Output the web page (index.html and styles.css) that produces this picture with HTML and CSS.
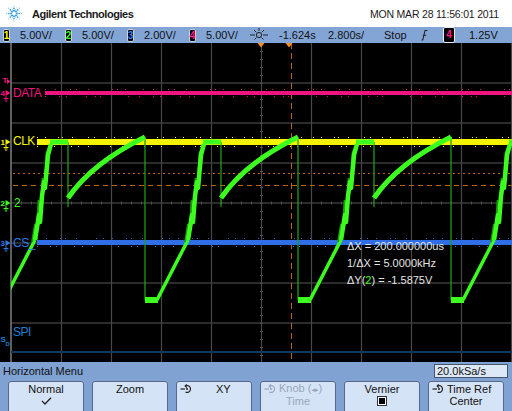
FILE: index.html
```html
<!DOCTYPE html>
<html lang="en">
<head>
<meta charset="utf-8">
<title>Agilent Scope</title>
<link rel="stylesheet" href="styles.css">
</head>
<body>
<div class="screen">
  <header class="top">
    <div class="brand">
      <svg class="logo" viewBox="0 0 28 24" width="22" height="23">
        <g fill="#3a9fd8">
          <circle cx="17.5" cy="12" r="1.3"/><circle cx="16.47" cy="14.47" r="1.3"/><circle cx="14" cy="15.5" r="1.3"/><circle cx="11.53" cy="14.47" r="1.3"/><circle cx="10.5" cy="12" r="1.3"/><circle cx="11.53" cy="9.53" r="1.3"/><circle cx="14" cy="8.5" r="1.3"/><circle cx="16.47" cy="9.53" r="1.3"/>
          <circle cx="20.5" cy="12" r="1.1"/><circle cx="18.6" cy="16.6" r="1.1"/><circle cx="14" cy="18.5" r="1.1"/><circle cx="9.4" cy="16.6" r="1.1"/><circle cx="7.5" cy="12" r="1.1"/><circle cx="9.4" cy="7.4" r="1.1"/><circle cx="14" cy="5.5" r="1.1"/><circle cx="18.6" cy="7.4" r="1.1"/>
        </g>
        <g fill="#7cc3ea">
          <circle cx="23.5" cy="12" r="0.8"/><circle cx="20.7" cy="18.7" r="0.8"/><circle cx="14" cy="21.5" r="0.8"/><circle cx="7.3" cy="18.7" r="0.8"/><circle cx="4.5" cy="12" r="0.8"/><circle cx="7.3" cy="5.3" r="0.8"/><circle cx="14" cy="2.5" r="0.8"/><circle cx="20.7" cy="5.3" r="0.8"/>
          <circle cx="18.6" cy="13.9" r="0.7"/><circle cx="15.9" cy="16.6" r="0.7"/><circle cx="12.1" cy="16.6" r="0.7"/><circle cx="9.4" cy="13.9" r="0.7"/><circle cx="9.4" cy="10.1" r="0.7"/><circle cx="12.1" cy="7.4" r="0.7"/><circle cx="15.9" cy="7.4" r="0.7"/><circle cx="18.6" cy="10.1" r="0.7"/>
          <circle cx="21.4" cy="15.1" r="0.55"/><circle cx="17.1" cy="19.4" r="0.55"/><circle cx="10.9" cy="19.4" r="0.55"/><circle cx="6.6" cy="15.1" r="0.55"/><circle cx="6.6" cy="8.9" r="0.55"/><circle cx="10.9" cy="4.6" r="0.55"/><circle cx="17.1" cy="4.6" r="0.55"/><circle cx="21.4" cy="8.9" r="0.55"/>
        </g>
      </svg>
      <span class="brand-name">Agilent Technologies</span>
    </div>
    <span class="date">MON MAR 28 11:56:01 2011</span>
  </header>

  <div class="status">
    <div class="ch"><span class="num c1">1</span><span class="val">5.00V/</span></div>
    <div class="ch"><span class="num c2">2</span><span class="val">5.00V/</span></div>
    <div class="ch"><span class="num c3">3</span><span class="val">2.00V/</span></div>
    <div class="ch"><span class="num c4">4</span><span class="val">5.00V/</span></div>
    <svg class="sun" viewBox="0 0 18 16" width="18" height="16">
      <g stroke="#222" stroke-width="1" fill="none">
        <circle cx="9" cy="8" r="2.6"/>
        <path d="M0 8 H5 M13 8 H18 M9 1 V4 M4 3 L6.3 5.3 M14 3 L11.7 5.3 M4.5 12.5 L6.5 10.5 M13.5 12.5 L11.5 10.5"/>
      </g>
    </svg>
    <span class="delay">-1.624s</span>
    <span class="tb">2.800s/</span>
    <span class="run">Stop</span>
    <svg class="edge" viewBox="0 0 7 12" width="7" height="12">
      <path d="M0.5 11 H1.8 L4 1.5 H6.5 M1.8 6.2 L5.2 6.2" stroke="#222" stroke-width="1.1" fill="none"/>
    </svg>
    <span class="src">4</span>
    <span class="lvl">1.25V</span>
  </div>

  <svg class="plot" viewBox="0 43 512 319" width="512" height="319">
    <defs>
      <clipPath id="area"><rect x="11" y="43" width="501" height="319"/></clipPath>
      <g id="cyc" fill="none" stroke-linecap="butt">
        <path d="M298,137 V300" stroke="#239a16" stroke-width="1.3"/>
        <path d="M221,142 V207" stroke="#239a16" stroke-width="1.3"/>
        <path d="M145,300 H158" stroke="#3dff1f" stroke-width="6"/>
        <path d="M157,300 L188,240" stroke="#3dff1f" stroke-width="3.5"/>
        <path d="M185,242 L188,224 L189.5,233 L191.5,200 L193.5,213 L195.5,178 L197.5,188 L199.5,153 L202,147" stroke="#1e9a10" stroke-width="1.8"/>
        <path d="M188,240 L192,215 L193,222 L195,196 L197,182 L198,188 L201,155 L204,144" stroke="#3dff1f" stroke-width="4.5" stroke-linejoin="round"/>
        <path d="M203,142 H221" stroke="#3dff1f" stroke-width="5"/>
        <path d="M221,198 Q245,163 298,137" stroke="#3dff1f" stroke-width="5"/>
      </g>
    </defs>

    <g stroke="#3b3b3b" stroke-width="1.4">
      <line x1="11" y1="83" x2="512" y2="83"/>
      <line x1="11" y1="123" x2="512" y2="123"/>
      <line x1="11" y1="163" x2="512" y2="163"/>
      <line x1="11" y1="203" x2="512" y2="203"/>
      <line x1="11" y1="243" x2="512" y2="243"/>
      <line x1="11" y1="283" x2="512" y2="283"/>
      <line x1="11" y1="323" x2="512" y2="323"/>
    </g>
    <line x1="11" y1="203" x2="512" y2="203" stroke="#505050" stroke-width="3" stroke-dasharray="1 9"/>
    <g stroke="#484848" stroke-width="1.2">
      <line x1="61.5" y1="43" x2="61.5" y2="362"/>
      <line x1="111.5" y1="43" x2="111.5" y2="362"/>
      <line x1="161.5" y1="43" x2="161.5" y2="362"/>
      <line x1="211.5" y1="43" x2="211.5" y2="362"/>
      <line x1="261.5" y1="43" x2="261.5" y2="362"/>
      <line x1="311.5" y1="43" x2="311.5" y2="362"/>
      <line x1="361.5" y1="43" x2="361.5" y2="362"/>
      <line x1="411.5" y1="43" x2="411.5" y2="362"/>
      <line x1="461.5" y1="43" x2="461.5" y2="362"/>
      <line x1="511.5" y1="43" x2="511.5" y2="362"/>
    </g>
    <line x1="261.5" y1="43" x2="261.5" y2="362" stroke="#505050" stroke-width="3" stroke-dasharray="1 7"/>
    <line x1="11" y1="43" x2="11" y2="362" stroke="#767676" stroke-width="1.6"/>

    <g stroke="#b8650f" stroke-width="1">
      <line x1="13" y1="173.5" x2="512" y2="173.5" stroke-dasharray="2 3"/>
      <line x1="13" y1="185.5" x2="512" y2="185.5" stroke-dasharray="5 4"/>
      <line x1="291.5" y1="43" x2="291.5" y2="362" stroke-dasharray="6 4"/>
    </g>
    <polygon points="257.5,43 264.5,43 261,47.5" fill="#f09020"/>
    <polygon points="285.5,43 292.5,43 289,47.5" fill="#f09020"/>

    <rect x="45" y="91" width="467" height="4" fill="#f0157e"/>
    <g stroke="#f0157e" stroke-width="1">
      <line x1="45" y1="89.5" x2="512" y2="89.5" stroke-dasharray="1 9 1 14 1 5 1 11 1 23 1 4 1 7 1 17"/>
      <line x1="45" y1="96.5" x2="512" y2="96.5" stroke-dasharray="1 13 1 6 1 19 1 8 1 4 1 27 1 10"/>
    </g>

    <rect x="37" y="139" width="475" height="6" fill="#f4f400"/>
    <g stroke="#f4f400" stroke-width="1">
      <line x1="37" y1="137.5" x2="512" y2="137.5" stroke-dasharray="1 7 1 12 1 3 1 9 1 15 1 5 1 11"/>
      <line x1="37" y1="146.5" x2="512" y2="146.5" stroke-dasharray="1 11 1 4 1 16 1 6 1 9 1 21"/>
    </g>

    <rect x="37" y="240" width="475" height="5" fill="#2f6ee6"/>
    <g stroke="#2f6ee6" stroke-width="1">
      <line x1="37" y1="238.5" x2="512" y2="238.5" stroke-dasharray="1 8 1 13 1 4 1 10 1 19 1 6"/>
      <line x1="37" y1="246.5" x2="512" y2="246.5" stroke-dasharray="1 12 1 5 1 17 1 7 1 9 1 25"/>
    </g>

    <rect x="11" y="351" width="501" height="2" fill="#0e3a62"/>

    <g clip-path="url(#area)">
      <use href="#cyc" x="-153"/>
      <use href="#cyc"/>
      <use href="#cyc" x="153"/>
      <use href="#cyc" x="306"/>
    </g>

    <text class="lbl" x="13" y="97" fill="#f0157e">DATA</text>
    <text class="lbl" x="13" y="145" fill="#f4f400">CLK</text>
    <text class="lbl" x="14" y="207" fill="#3dff1f">2</text>
    <text class="lbl" x="13" y="247" fill="#2f7ae8">CS_</text>
    <text class="lbl" x="13" y="336" fill="#1e80d2">SPI</text>

    <text class="mk" x="2.5" y="83" fill="#f0157e">T</text>
    <polygon points="7,79 10.5,81.5 7,84" fill="#f0157e"/>

    <text class="mk" x="0.5" y="96" fill="#f0157e">4</text>
    <polygon points="5.5,90 10.5,93 5.5,96" fill="#f0157e"/>
    <path d="M6,96 V98 M3.5,98.5 H8.5 M4.5,100 H7.5 M5.5,101.5 H6.5" stroke="#f0157e" stroke-width="1"/>

    <text class="mk" x="0.5" y="145" fill="#f4f400">1</text>
    <polygon points="5.5,139 10.5,142 5.5,145" fill="#f4f400"/>
    <path d="M6,145 V147 M3.5,147.5 H8.5 M4.5,149 H7.5 M5.5,150.5 H6.5" stroke="#f4f400" stroke-width="1"/>

    <text class="mk" x="0.5" y="206" fill="#3dff1f">2</text>
    <polygon points="5.5,200 10.5,203 5.5,206" fill="#3dff1f"/>
    <path d="M6,206 V208 M3.5,208.5 H8.5 M4.5,210 H7.5 M5.5,211.5 H6.5" stroke="#3dff1f" stroke-width="1"/>

    <text class="mk" x="0.5" y="246" fill="#2f7ae8">3</text>
    <polygon points="5.5,240 10.5,243 5.5,246" fill="#2f7ae8"/>
    <path d="M6,246 V248 M3.5,248.5 H8.5 M4.5,250 H7.5 M5.5,251.5 H6.5" stroke="#2f7ae8" stroke-width="1"/>

    <text class="mk" x="0.5" y="342" fill="#1e80d2">S</text>
    <text class="mk-sub" x="5.5" y="346" fill="#1e80d2">D</text>

    <text class="meas" x="347" y="250">ΔX = 200.000000us</text>
    <text class="meas" x="347" y="267">1/ΔX = 5.0000kHz</text>
    <text class="meas" x="347" y="284">ΔY(<tspan fill="#3dff1f">2</tspan>) = -1.5875V</text>
  </svg>

  <div class="menu">
    <div class="menu-head">
      <span class="menu-title">Horizontal Menu</span>
      <span class="rate">20.0kSa/s</span>
    </div>
    <div class="buttons">
      <div class="btn">
        <div class="l1">Normal</div>
        <div class="l2"><svg class="check" viewBox="0 0 11 8" width="11" height="8"><path d="M1 4 L4 7 L10 0.8" stroke="#222" stroke-width="1.3" fill="none"/></svg></div>
      </div>
      <div class="btn">
        <div class="l1">Zoom</div>
      </div>
      <div class="btn">
        <div class="l1 ic">
          <svg class="knob" viewBox="0 0 12 10" width="12" height="10"><g stroke="#222" stroke-width="1.2" fill="none"><path d="M5.5 2 A3.4 3.4 0 1 1 5.5 8"/><path d="M0.5 5 H5"/><path d="M6.8 0.4 L5.2 2 L6.8 3.6"/></g><circle cx="7" cy="5" r="1" fill="#222"/></svg>
          <span class="xy">XY</span>
        </div>
      </div>
      <div class="btn off">
        <div class="l1 ic">
          <svg class="knob" viewBox="0 0 12 10" width="12" height="10"><g stroke="#98a6bb" stroke-width="1.2" fill="none"><path d="M5.5 2 A3.4 3.4 0 1 1 5.5 8"/><path d="M0.5 5 H5"/><path d="M6.8 0.4 L5.2 2 L6.8 3.6"/></g><circle cx="7" cy="5" r="1" fill="#98a6bb"/></svg>
          <span class="txt">Knob (<span class="lr">◂▸</span>)</span>
        </div>
        <div class="l2">Time</div>
      </div>
      <div class="btn">
        <div class="l1">Vernier</div>
        <div class="l2"><span class="box"></span></div>
      </div>
      <div class="btn">
        <div class="l1 ic">
          <svg class="knob" viewBox="0 0 12 10" width="12" height="10"><g stroke="#222" stroke-width="1.2" fill="none"><path d="M5.5 2 A3.4 3.4 0 1 1 5.5 8"/><path d="M0.5 5 H5"/><path d="M6.8 0.4 L5.2 2 L6.8 3.6"/></g><circle cx="7" cy="5" r="1" fill="#222"/></svg>
          <span class="txt">Time Ref</span>
        </div>
        <div class="l2">Center</div>
      </div>
    </div>
  </div>
</div>
</body>
</html>
```
FILE: styles.css
```css
* { box-sizing: border-box; margin: 0; padding: 0; }
html, body { width: 512px; height: 411px; overflow: hidden; background: #000; }
body { font-family: "Liberation Sans", Arial, sans-serif; color: #111; }

.screen { width: 512px; height: 411px; display: flex; flex-direction: column; overflow: hidden; }

.top { height: 27px; flex-shrink: 0; background: #fff; display: flex; align-items: center; justify-content: space-between; padding: 0 13px 0 3px; }
.brand { display: flex; align-items: center; gap: 7px; }
.logo { display: block; }
.brand-name { font-weight: bold; font-size: 11px; letter-spacing: -0.45px; color: #1a1a1a; }
.date { font-size: 10.5px; letter-spacing: -0.2px; color: #1a1a1a; }

.status { height: 16px; flex-shrink: 0; background: #83a5d5; display: flex; align-items: center; padding-left: 3px; font-size: 11px; color: #111; white-space: nowrap; }
.ch { width: 62px; flex-shrink: 0; display: flex; align-items: center; }
.num { width: 7px; height: 13px; flex-shrink: 0; margin-right: 10px; background: #000; border: 1px solid #c9d1da; border-radius: 2px; font-size: 10px; font-weight: bold; line-height: 11px; text-align: center; display: flex; justify-content: center; }
.c1 { color: #ffff00; }
.c2 { color: #33ff22; }
.c3 { color: #3a7ef0; }
.c4 { color: #ff1a8c; }
.sun { flex-shrink: 0; margin-left: -1px; display: block; }
.delay { width: 40px; flex-shrink: 0; margin-left: 11px; }
.tb { width: 40px; flex-shrink: 0; margin-left: 9px; }
.run { width: 26px; flex-shrink: 0; margin-left: 16px; }
.edge { flex-shrink: 0; margin-left: 11px; display: block; }
.src { width: 12px; height: 16px; flex-shrink: 0; margin-left: 15px; background: #000; border: 1px solid #e8ecf0; border-radius: 2px; color: #ff1a8c; font-size: 10px; font-weight: bold; line-height: 14px; text-align: center; }
.lvl { margin-left: 14px; }

.plot { display: block; flex-shrink: 0; background: #000; }
.lbl { font-family: "Liberation Sans", Arial, sans-serif; font-size: 12px; letter-spacing: -0.5px; }
.mk { font-family: "Liberation Sans", Arial, sans-serif; font-size: 8px; font-weight: bold; }
.mk-sub { font-family: "Liberation Sans", Arial, sans-serif; font-size: 6px; font-weight: bold; }
.meas { font-family: "Liberation Sans", Arial, sans-serif; font-size: 11px; fill: #e4e4e4; }

.menu { flex: 1; background: #7fa2d3; overflow: hidden; }
.menu-head { height: 19px; display: flex; justify-content: space-between; align-items: flex-start; padding: 0 4px 0 3px; }
.menu-title { font-size: 11px; line-height: 13px; padding-top: 3px; }
.rate { width: 74px; height: 14px; margin-top: 2px; background: #dde8f7; border: 1px solid #44546c; font-size: 11px; line-height: 12px; padding-left: 2px; }

.buttons { display: flex; gap: 8px; padding-left: 8px; }
.btn { width: 76px; height: 33px; flex-shrink: 0; background: #d5e3f6; border: 1px solid #56698a; border-radius: 3px; font-size: 11px; line-height: 12px; text-align: center; color: #111; padding-top: 1px; }
.l1, .l2 { height: 12px; }
.l1.ic { display: flex; align-items: center; padding-left: 3px; text-align: left; white-space: nowrap; }
.knob { display: block; flex-shrink: 0; }
.ic .txt { margin-left: 3px; }
.ic .xy { margin-left: 24px; }
.off { color: #98a6bb; }
.lr { font-family: "DejaVu Sans", sans-serif; font-size: 7px; }
.check { display: block; margin: 2px auto 0; }
.box { display: block; width: 10px; height: 10px; margin: 1px auto 0; background: #000; border: 1px solid #333; box-shadow: inset 0 0 0 1px #fff; }
```
